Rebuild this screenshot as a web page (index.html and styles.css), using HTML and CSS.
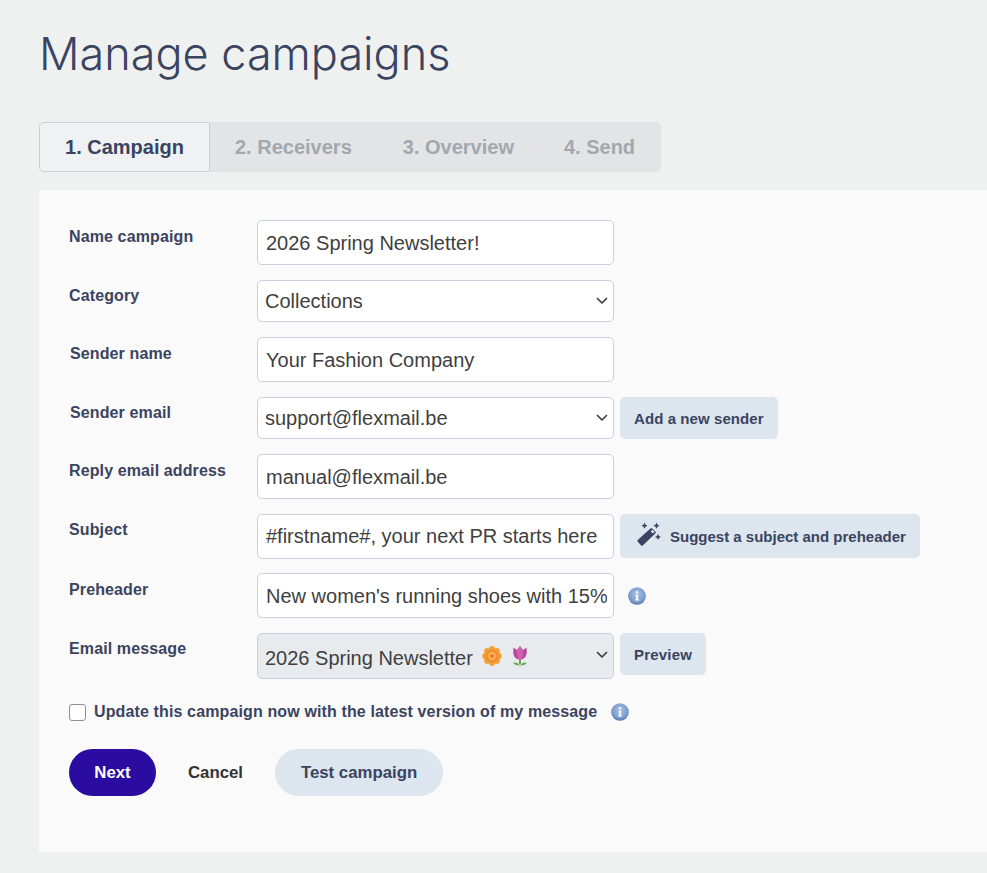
FILE: index.html
```html
<!DOCTYPE html>
<html lang="en">
<head>
<meta charset="utf-8">
<title>Manage campaigns</title>
<link rel="stylesheet" href="styles.css">
</head>
<body>
<svg class="defs" width="0" height="0" aria-hidden="true">
  <defs>
    <radialGradient id="infoFill" cx="50%" cy="40%" r="60%">
      <stop offset="0" stop-color="#a9c0e2"/>
      <stop offset="0.7" stop-color="#7f9fd0"/>
      <stop offset="1" stop-color="#5575ac"/>
    </radialGradient>
    <symbol id="chev" viewBox="0 0 12 8"><path d="M1.500 1.500 6 6l4.500-4.500" fill="none" stroke="#3f3f3f" stroke-width="1.700" stroke-linecap="round" stroke-linejoin="round"/></symbol>
    <symbol id="info" viewBox="0 0 18 18">
      <circle cx="9" cy="9" r="8.800" fill="url(#infoFill)"/>
      <circle cx="9" cy="5.200" r="1.300" fill="#f4f7fb"/>
      <path d="M7.600 7.600h2.600v4.800h.9v1.200H7v-1.200h.9V8.800h-.3z" fill="#f4f7fb"/>
    </symbol>
  </defs>
</svg>
<h1 class="title">Manage campaigns</h1>
<nav class="tabs">
  <a class="tab tab-active">1. Campaign</a>
  <a class="tab tab-r">2. Receivers</a>
  <a class="tab tab-o">3. Overview</a>
  <a class="tab tab-s">4. Send</a>
</nav>
<main class="panel">
  <div class="row row-1">
    <label class="label">Name campaign</label>
    <input class="field" type="text" value="2026 Spring Newsletter!">
  </div>
  <div class="row row-2">
    <label class="label label-up">Category</label>
    <div class="select-wrap">
      <select class="field select"><option>Collections</option></select>
      <svg class="chev"><use href="#chev"/></svg>
    </div>
  </div>
  <div class="row row-3">
    <label class="label label-s">Sender name</label>
    <input class="field" type="text" value="Your Fashion Company">
  </div>
  <div class="row row-4">
    <label class="label label-s label-up">Sender email</label>
    <div class="select-wrap">
      <select class="field select"><option>support@flexmail.be</option></select>
      <svg class="chev"><use href="#chev"/></svg>
    </div>
    <button class="btn-soft" type="button">Add a new sender</button>
  </div>
  <div class="row row-5">
    <label class="label">Reply email address</label>
    <input class="field" type="text" value="manual@flexmail.be">
  </div>
  <div class="row row-6">
    <label class="label label-up">Subject</label>
    <input class="field field-flat" type="text" value="#firstname#, your next PR starts here">
    <button class="btn-soft btn-suggest" type="button">
      <svg class="wand" viewBox="0 0 24 24" aria-hidden="true">
        <path d="M1 17.800 13.400 6.600a1.400 1.400 0 0 1 1.900 0l3 3a1.400 1.400 0 0 1 0 2L6 23.300a1.400 1.400 0 0 1-2 0l-3-3.400a1.400 1.400 0 0 1 0-2.100z" fill="#3a4460"/>
        <path d="M13.700 9.200l1.700-1.500 2.200 2.300-1.700 1.500z" fill="#dde5ee"/>
        <path d="M7.500.6l1 2.100 2.100 1-2.100 1-1 2.100-1-2.100-2.100-1 2.100-1zM19.500.6l1 2.100 2.100 1-2.100 1-1 2.100-1-2.100-2.100-1 2.100-1zM21 11.800l1 2.100 2 1-2 1-1 2.100-1-2.100-2.100-1 2.100-1z" fill="#3a4460"/>
      </svg>
      <span>Suggest a subject and preheader</span>
    </button>
  </div>
  <div class="row row-7">
    <label class="label">Preheader</label>
    <input class="field" type="text" value="New women's running shoes with 15% off this spring">
    <svg class="info info-row"><use href="#info"/></svg>
  </div>
  <div class="row row-8">
    <label class="label label-up">Email message</label>
    <div class="select-wrap">
      <div class="field select-fake"><span>2026 Spring Newsletter</span>
        <svg class="flower" viewBox="0 0 20 20" aria-hidden="true">
          <g fill="#f2a23a">
            <circle cx="10" cy="3.200" r="3.100"/><circle cx="14.800" cy="5.200" r="3.100"/><circle cx="16.800" cy="10" r="3.100"/><circle cx="14.800" cy="14.800" r="3.100"/>
            <circle cx="10" cy="16.800" r="3.100"/><circle cx="5.200" cy="14.800" r="3.100"/><circle cx="3.200" cy="10" r="3.100"/><circle cx="5.200" cy="5.200" r="3.100"/>
          </g>
          <circle cx="10" cy="10" r="6.800" fill="#ef8f30"/>
          <circle cx="10" cy="10" r="4.200" fill="#f6ae48"/>
          <circle cx="10" cy="10" r="1.500" fill="#e8603c"/>
        </svg>
        <svg class="tulip" viewBox="0 0 16 20" aria-hidden="true">
          <path d="M8 12v6" stroke="#5f9e45" stroke-width="1.800"/>
          <path d="M8 19.500c-3.200 0-5.800-.6-6.800-3 3 -.4 5.700.7 6.800 3zm0 0c3.200 0 5.800-.6 6.800-3-3-.4-5.700.7-6.800 3z" fill="#6aa84f"/>
          <path d="M1.600 1.800 5 4 8 .2 11 4l3.400-2.200c.9 4.600.6 11.700-6.400 11.700S.7 6.400 1.600 1.800z" fill="#b8479a"/>
          <path d="M5 4 8 .2 11 4c.6 3.200-.4 9.500-3 9.500S4.400 7.200 5 4z" fill="#d05fae"/>
        </svg>
      </div>
      <svg class="chev chev-up"><use href="#chev"/></svg>
    </div>
    <button class="btn-soft btn-preview" type="button">Preview</button>
  </div>
  <div class="check-row">
    <input class="check" type="checkbox" id="upd">
    <label class="check-label" for="upd">Update this campaign now with the latest version of my message</label>
    <svg class="info info-check"><use href="#info"/></svg>
  </div>
  <div class="actions">
    <button class="pill pill-primary" type="button">Next</button>
    <a class="cancel">Cancel</a>
    <button class="pill pill-soft" type="button">Test campaign</button>
  </div>
</main>
</body>
</html>
```
FILE: styles.css
```css
* { box-sizing: border-box; }
html, body { margin: 0; padding: 0; }
body {
  height: 873px;
  overflow: hidden;
  background: #eff1f1;
  font-family: "Liberation Sans", Arial, sans-serif;
  color: #3a4460;
  padding: 26px 0 0 39px;
}
.defs { position: absolute; }
.title {
  margin: 0;
  height: 56px;
  font-family: Inter, sans-serif;
  font-weight: 300;
  font-size: 45px;
  line-height: 56px;
  color: #3a4460;
}
.tabs {
  display: flex;
  width: 622px;
  height: 50px;
  margin-top: 40px;
  background: #e2e4e6;
  border-radius: 5px;
}
.tab {
  display: flex;
  align-items: center;
  font-size: 20px;
  font-weight: 700;
  color: #a1a8ae;
}
.tab-active {
  width: 171px;
  justify-content: center;
  background: #eff1f3;
  border: 1px solid #c8d0e0;
  border-radius: 5px 0 0 5px;
  color: #3a4460;
}
.tab-r { margin-left: 25px; }
.tab-o { margin-left: 51px; }
.tab-s { margin-left: 50px; }
.panel {
  background: #fafafa;
  height: 662px;
  margin-top: 18px;
  padding: 30px 0 0 30px;
}
.row {
  display: flex;
  align-items: flex-start;
  gap: 6px;
  margin-bottom: 15px;
}
.row-6 { margin-bottom: 14px; }
.label {
  width: 182px;
  flex: none;
  padding-top: 8px;
  font-size: 16px;
  font-weight: 700;
  letter-spacing: 0.12px;
  line-height: 18px;
  color: #3a4460;
}
.label-up { padding-top: 7px; }
.label-s { padding-left: 1px; }
.field {
  display: block;
  width: 357px;
  height: 45px;
  padding: 1px 6px 0 8px;
  background: #fff;
  border: 1px solid #c8d0e0;
  border-radius: 5px;
  font-family: "Liberation Sans", Arial, sans-serif;
  font-size: 20px;
  color: #3f3f3f;
  outline: none;
}
.field-flat { padding-top: 0; }
.select-wrap { position: relative; width: 357px; flex: none; }
.select {
  height: 42px;
  padding: 0 0 0 7px;
  appearance: none;
}
.select-fake {
  display: flex;
  align-items: center;
  height: 46px;
  padding: 4px 0 0 7px;
  background: #e8ebed;
}
.chev {
  position: absolute;
  right: 6px;
  top: 50%;
  width: 12px;
  height: 8px;
  margin-top: -4px;
  pointer-events: none;
}
.chev-up { margin-top: -5px; }
.flower { width: 20px; height: 20px; margin: -4px 0 0 9px; }
.tulip { width: 16px; height: 20px; margin: -4px 0 0 10px; }
.btn-soft {
  display: flex;
  align-items: center;
  height: 42px;
  padding: 0 14px;
  background: #dde5ee;
  border: 0;
  border-radius: 5px;
  font-family: "Liberation Sans", Arial, sans-serif;
  font-size: 15px;
  font-weight: 700;
  letter-spacing: 0.08px;
  color: #3a4460;
  white-space: nowrap;
}
.row-4 .btn-soft { width: 158px; }
.btn-preview { width: 86px; letter-spacing: 0.2px; }
.btn-suggest { height: 44px; padding-left: 17px; width: 300px; letter-spacing: 0; }
.wand { width: 24px; height: 24px; margin: -4px 9px 0 0; flex: none; }
.info { width: 18px; height: 18px; flex: none; }
.info-row { margin: 14px 0 0 8px; }
.check-row {
  display: flex;
  align-items: center;
  height: 18px;
  margin-top: 24px;
}
.check {
  appearance: none;
  width: 17px;
  height: 17px;
  margin: 0 8px 0 0;
  flex: none;
  background: #fff;
  border: 1px solid #8f8f9d;
  border-radius: 3px;
}
.check-label {
  font-size: 16px;
  font-weight: 700;
  letter-spacing: 0.13px;
  color: #3a4460;
}
.info-check { margin-left: 14px; }
.actions {
  display: flex;
  align-items: center;
  margin-top: 28px;
}
.pill {
  height: 47px;
  border: 0;
  border-radius: 24px;
  font-family: "Liberation Sans", Arial, sans-serif;
  font-size: 16.800px;
  font-weight: 700;
}
.pill-primary { width: 87px; background: #2a0ca0; color: #fff; }
.cancel { margin-left: 32px; font-size: 16.800px; font-weight: 700; color: #333; }
.pill-soft { width: 168px; margin-left: 32px; background: #dde5ee; color: #3a4460; }
```
